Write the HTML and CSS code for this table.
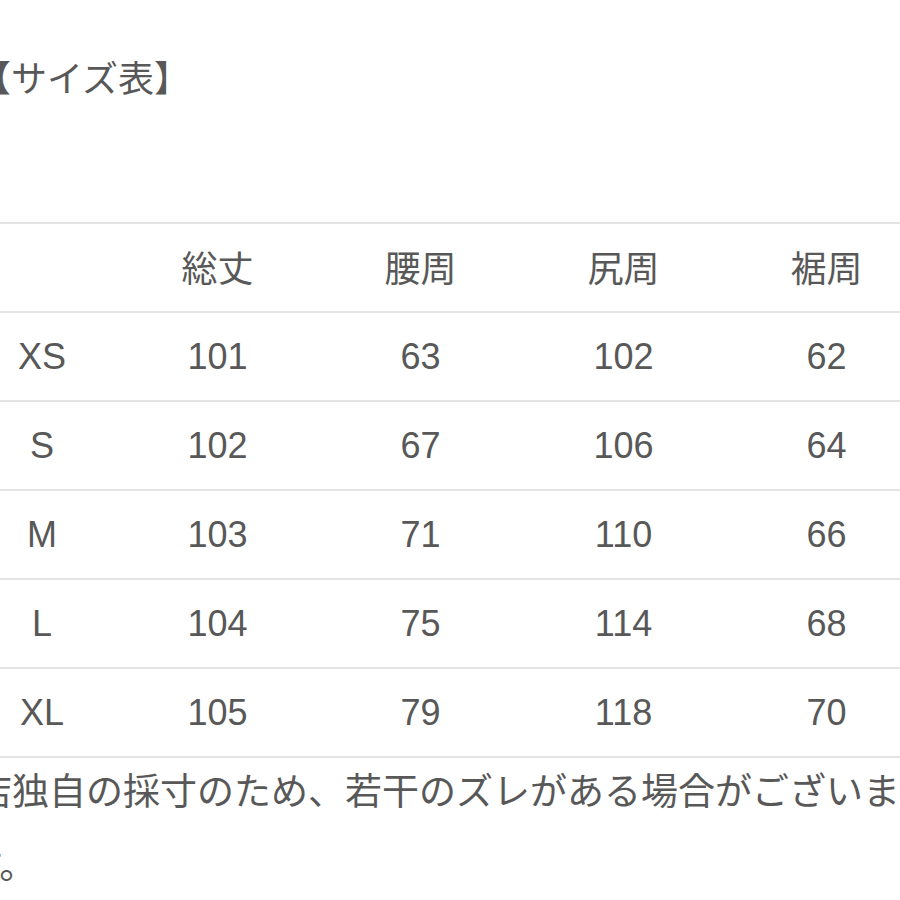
FILE: index.html
```html
<!DOCTYPE html>
<html lang="ja">
<head>
<meta charset="utf-8">
<link rel="stylesheet" href="styles.css">
</head>
<body>
<main class="page">
  <h1 class="title">【サイズ表】</h1>
  <table class="size-table">
    <colgroup>
      <col class="col-size">
      <col class="col-val">
      <col class="col-val">
      <col class="col-val">
      <col class="col-val">
    </colgroup>
    <thead>
      <tr><th></th><th>総丈</th><th>腰周</th><th>尻周</th><th>裾周</th></tr>
    </thead>
    <tbody>
      <tr><td>XS</td><td>101</td><td>63</td><td>102</td><td>62</td></tr>
      <tr><td>S</td><td>102</td><td>67</td><td>106</td><td>64</td></tr>
      <tr><td>M</td><td>103</td><td>71</td><td>110</td><td>66</td></tr>
      <tr><td>L</td><td>104</td><td>75</td><td>114</td><td>68</td></tr>
      <tr><td>XL</td><td>105</td><td>79</td><td>118</td><td>70</td></tr>
    </tbody>
  </table>
  <p class="note">※当店独自の採寸のため、若干のズレがある場合がございます。</p>
</main>
</body>
</html>
```

FILE: styles.css
```css
html, body {
  margin: 0;
  padding: 0;
  background: #ffffff;
}
body {
  width: 900px;
  height: 900px;
  overflow: hidden;
  font-family: "Liberation Sans", "Noto Sans CJK JP", sans-serif;
  color: #585858;
}
.page {
  display: flex;
  flex-direction: column;
}
.title {
  margin: 60px 0 0 -25px;
  font-size: 36px;
  font-weight: 400;
  line-height: 40px;
  color: #585858;
}
.size-table {
  margin: 122px 0 0 -32px;
  width: 960px;
  table-layout: fixed;
  border-collapse: collapse;
}
.col-size { width: 148px; }
.col-val { width: 203px; }
.size-table tr {
  height: 89px;
  border-top: 2px solid #e4e4e4;
  border-bottom: 2px solid #e4e4e4;
}
.size-table th,
.size-table td {
  padding: 0;
  text-align: center;
  vertical-align: middle;
  font-size: 36px;
  font-weight: 400;
  color: #585858;
}
.size-table th {
  padding-bottom: 4px;
}
.note {
  margin: -2px 0 0 -34px;
  width: 950px;
  text-indent: -65px;
  font-size: 37px;
  line-height: 74px;
  color: #585858;
}
```
